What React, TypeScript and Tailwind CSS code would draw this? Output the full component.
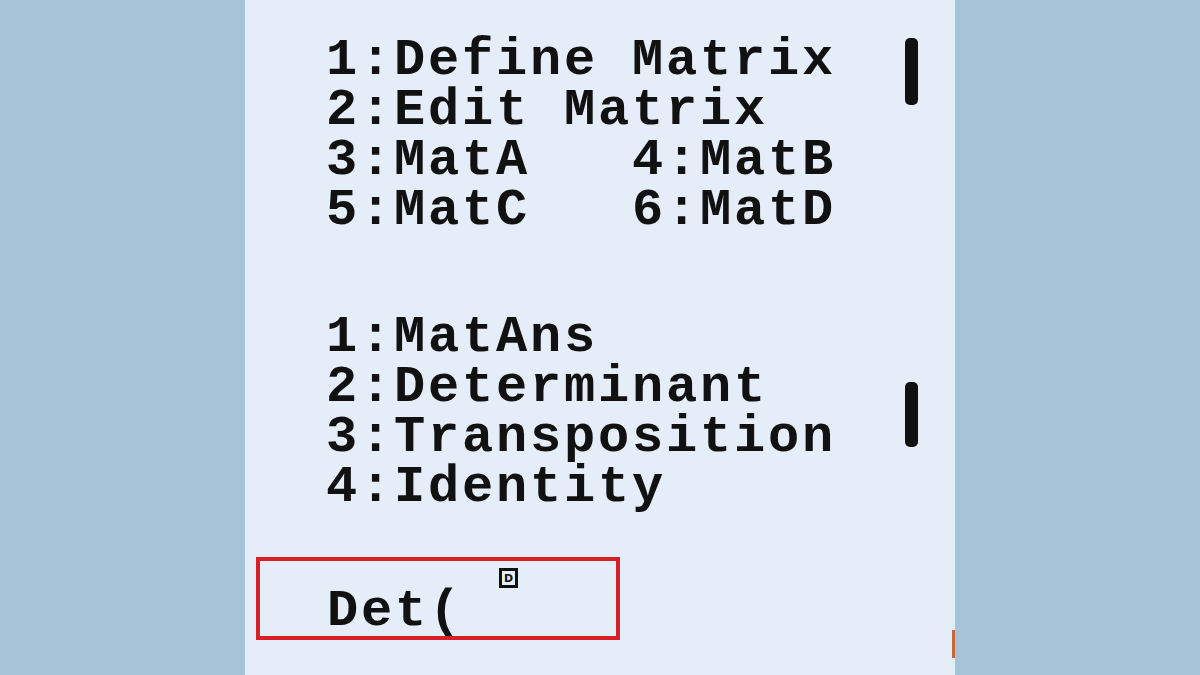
export default function App() {
  const top = ["1:Define Matrix", "2:Edit Matrix", "3:MatA   4:MatB", "5:MatC   6:MatD"];
  const bottom = ["1:MatAns", "2:Determinant", "3:Transposition", "4:Identity"];

  const lcd =
    "font-['Liberation_Mono',monospace] font-bold text-[52px] leading-[50px] tracking-[2.8px] text-[#111] whitespace-pre";

  return (
    <div className="w-[1200px] h-[675px] bg-[#a5c4d7] overflow-hidden">
      <div className="relative mx-auto w-[710px] h-[675px] bg-[#e5edf9]">
        {/* menu page 1 */}
        <div className="flex pt-[36px]">
          <div className={`pl-[81px] w-[660px] ${lcd}`}>
            {top.map((t) => (
              <div key={t}>{t}</div>
            ))}
          </div>
          <div className="mt-[2px] w-[13px] h-[67px] rounded-[5px] bg-[#111]" />
        </div>

        {/* menu page 2 */}
        <div className="flex mt-[77px]">
          <div className={`pl-[81px] w-[660px] ${lcd}`}>
            {bottom.map((t) => (
              <div key={t}>{t}</div>
            ))}
          </div>
          <div className="mt-[69px] w-[13px] h-[65px] rounded-[5px] bg-[#111]" />
        </div>

        {/* input line */}
        <div className="relative ml-[11px] mt-[44px] w-[364px] h-[83px] border-4 border-[#d61f26] pt-[26px] pl-[67px]">
          <div className={lcd}>Det(</div>
          <div className="absolute left-[239px] top-[7px] w-[19px] h-[20px] border-[3px] border-[#111] flex items-center justify-center">
            <span className="font-['DejaVu_Sans',sans-serif] font-bold text-[11px] leading-none text-[#111]">D</span>
          </div>
        </div>

        <div className="absolute right-0 top-[630px] w-[3px] h-[28px] bg-[#c9673a]" />
      </div>
    </div>
  );
}
